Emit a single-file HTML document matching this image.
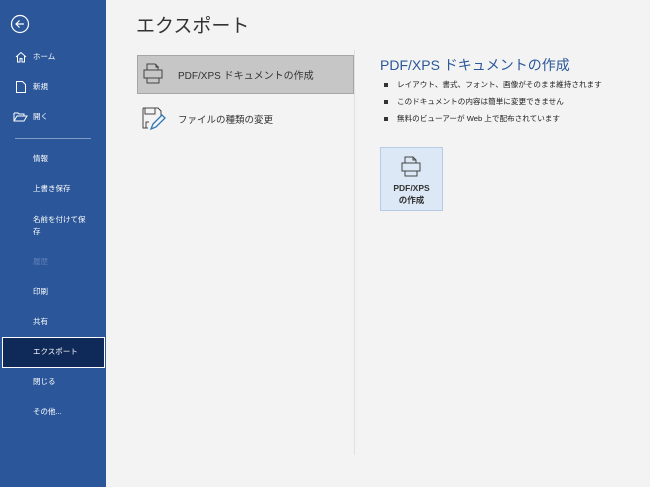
<!DOCTYPE html>
<html><head><meta charset="utf-8"><style>
*{margin:0;padding:0;box-sizing:border-box}
body{width:650px;height:487px;background:#f3f3f3;font-family:"Liberation Sans","Noto Sans CJK JP",sans-serif;position:relative;overflow:hidden}
.side{position:absolute;left:0;top:0;width:106px;height:487px;background:#2b579a;color:#fff}
.it{position:absolute;font-size:7.5px;left:33px;line-height:12px}
.sel{position:absolute;left:2px;top:337px;width:103px;height:31px;background:#0f2a58;border:1px solid #fff}
.abs{position:absolute}
.bl{position:absolute;left:384px;width:4px;height:4px;background:#333}
.bt{position:absolute;left:397px;font-size:7.6px;color:#222}
</style></head><body>
<div class="side">
<svg class="abs" style="left:10px;top:14px" width="20" height="20"><circle cx="10" cy="10" r="8.5" fill="none" stroke="#fff" stroke-width="1.2"/><path d="M14 10H6M9.5 6.5L6 10l3.5 3.5" fill="none" stroke="#fff" stroke-width="1.2"/></svg>
<svg class="abs" style="left:14px;top:50px" width="14" height="14"><path d="M2 7L7 2.5 12 7M3.5 6v6h2.5v-3.5h2V12h2.5V6" fill="none" stroke="#fff" stroke-width="1"/></svg>
<div class="it" style="top:51px">ホーム</div>
<svg class="abs" style="left:15px;top:80px" width="12" height="14"><path d="M1.5 1.5h6l3 3v8h-9z" fill="none" stroke="#fff"/></svg>
<div class="it" style="top:81px">新規</div>
<svg class="abs" style="left:13px;top:111px" width="16" height="12"><path d="M1 2h4l1 1h5v2M1 2v8h10l3-5H4L1 10" fill="none" stroke="#fff"/></svg>
<div class="it" style="top:111px">開く</div>
<div class="abs" style="left:15px;top:138px;width:76px;height:1px;background:#7f9cc7"></div>
<div class="it" style="top:153px">情報</div>
<div class="it" style="top:183px">上書き保存</div>
<div class="it" style="top:214px">名前を付けて保<br>存</div>
<div class="it" style="top:256px;color:#5f7fb5">履歴</div>
<div class="it" style="top:286px">印刷</div>
<div class="it" style="top:316px">共有</div>
<div class="sel"></div>
<div class="it" style="top:346px">エクスポート</div>
<div class="it" style="top:376px">閉じる</div>
<div class="it" style="top:406px">その他...</div>
</div>
<div class="abs" style="left:136px;top:11px;font-size:19px;color:#333">エクスポート</div>
<div class="abs" style="left:354px;top:50px;width:1px;height:405px;background:#e0e0e0"></div>
<div class="abs" style="left:137px;top:55px;width:217px;height:39px;background:#c6c6c6;border:1px solid #a6a6a6"></div>
<svg class="abs" style="left:142px;top:62px" width="22" height="24"><path d="M5 8V2h8l3 3v3M14 2v3h3M2 8h18v8H2zM5 16v5h12v-5" fill="none" stroke="#444" stroke-width="1"/></svg>
<div class="abs" style="left:178px;top:67px;font-size:10px;color:#333">PDF/XPS ドキュメントの作成</div>
<svg class="abs" style="left:141px;top:106px" width="26" height="26"><path d="M2 2h15l3 3v5M2 2v20h5M4 2v6h10V2M5 22v-6h3" fill="none" stroke="#444" stroke-width="1"/><path d="M10 23l2-5 9-9 3 3-9 9z" fill="none" stroke="#2e75b6" stroke-width="1.3"/></svg>
<div class="abs" style="left:178px;top:112px;font-size:9.5px;color:#333">ファイルの種類の変更</div>
<div class="abs" style="left:380px;top:55px;font-size:14px;color:#2b579a">PDF/XPS ドキュメントの作成</div>
<div class="bl" style="top:83px"></div><div class="bt" style="top:79px">レイアウト、書式、フォント、画像がそのまま維持されます</div>
<div class="bl" style="top:100px"></div><div class="bt" style="top:96px">このドキュメントの内容は簡単に変更できません</div>
<div class="bl" style="top:117px"></div><div class="bt" style="top:113px">無料のビューアーが Web 上で配布されています</div>
<div class="abs" style="left:380px;top:147px;width:63px;height:64px;background:#dde8f6;border:1px solid #b8cbe6"></div>
<svg class="abs" style="left:400px;top:155px" width="22" height="24"><path d="M5 8V2h8l3 3v3M13 2v3h3M2 8h18v8H2zM5 16v5h12v-5" fill="none" stroke="#444" stroke-width="1"/></svg>
<div class="abs" style="left:380px;top:182px;width:63px;text-align:center;font-size:8.5px;font-weight:bold;color:#333;line-height:12px">PDF/XPS<br>の作成</div>
</body></html>
